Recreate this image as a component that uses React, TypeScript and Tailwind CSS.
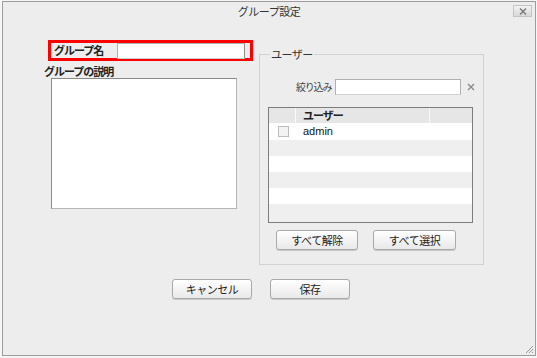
import React from "react";

const jp = { fontFamily: '"Noto Sans CJK JP", "Noto Sans", sans-serif' };

function Btn({ label, className }: { label: string; className: string }) {
  return (
    <button
      className={`${className} block h-[20px] rounded-[3px] border border-[#a9a9a9] bg-gradient-to-b from-white to-[#e9e9e9] text-[11px] leading-none tracking-[-0.5px] text-[#222] shadow-[0_1px_0_#c8c8c8]`}
      style={jp}
    >
      {label}
    </button>
  );
}

const rows = [
  { name: "admin", bg: "bg-white", h: "h-[17px]" },
  { name: "", bg: "bg-[#efefef]", h: "h-[16px]" },
  { name: "", bg: "bg-white", h: "h-[16px]" },
  { name: "", bg: "bg-[#efefef]", h: "h-[16px]" },
  { name: "", bg: "bg-white", h: "h-[16px]" },
  { name: "", bg: "bg-[#efefef]", h: "flex-1" },
];

export default function App() {
  return (
    <div className="w-[537px] h-[358px] bg-[#f6f6f6] overflow-hidden" style={jp}>
      <div className="relative ml-[2px] mt-[1px] w-[534px] h-[355px] border border-[#9c9c9c] bg-[#ededed] flex flex-col text-[#222]">
        {/* title bar */}
        <div className="relative h-[18px] flex items-center justify-center text-[11px] tracking-[-0.5px] text-[#333]">
          グループ設定
          <div className="absolute right-[3px] top-[3px] w-[19px] h-[12px] border border-[#c4c4c4] bg-gradient-to-b from-[#f2f2f2] to-[#d8d8d8] flex items-center justify-center">
            <svg width="8" height="7" viewBox="0 0 8 7">
              <path d="M1 0.5 L7 6.5 M7 0.5 L1 6.5" stroke="#777" strokeWidth="1.3" />
            </svg>
          </div>
        </div>

        <div className="flex items-start">
          {/* left column */}
          <div className="ml-[40px] mt-[20px] flex flex-col w-[209px]">
            <div className="ml-[5px] w-[205px] h-[21px] border-[3px] border-[#ff0000] flex items-center">
              <span className="pl-[3px] w-[66px] text-[11px] font-bold tracking-[-1px] leading-none">
                グループ名
              </span>
              <div className="w-[128px] h-[16px] bg-white border border-[#b0b0b0] border-r-[#8f8f8f] border-b-[#cfcfcf]" />
            </div>
            <div className="mt-[3px] ml-[1px] h-[14px] text-[11px] font-bold tracking-[-1px] leading-[14px]">
              グループの説明
            </div>
            <div className="ml-[8px] w-[186px] h-[131px] bg-white border border-[#8a8a8a] border-b-[#b5b5b5] border-r-[#b5b5b5]" />
          </div>

          {/* right column */}
          <fieldset className="ml-[7px] mt-[28px] w-[223px] border border-[#d2d2d2] px-[8px] pb-[14px]">
            <legend className="ml-[2px] px-[1px] text-[11px] leading-[12px] tracking-[-0.5px] text-[#333]">
              ユーザー
            </legend>
            <div className="mt-[19px] flex items-center h-[16px]">
              <span className="ml-[28px] w-[39px] text-[10px] tracking-[-1.2px] text-[#444] leading-none">
                絞り込み
              </span>
              <div className="w-[126px] h-[16px] bg-white border border-[#b0b0b0] border-b-[#d0d0d0]" />
              <svg className="ml-[6px]" width="8" height="8" viewBox="0 0 8 8">
                <path d="M1 1 L7 7 M7 1 L1 7" stroke="#8a8a8a" strokeWidth="1.4" />
              </svg>
            </div>

            {/* user table */}
            <div className="mt-[12px] w-[205px] h-[116px] border border-[#7c7c7c] flex flex-col bg-white shadow-[inset_1px_1px_0_#b8b8b8]">
              <div className="h-[15px] flex bg-[#e6e6e6] text-[11px] leading-[15px]">
                <div className="w-[27px] border-r border-[#fafafa]" />
                <div className="w-[134px] border-r border-[#fafafa] pl-[7px] font-bold tracking-[-1px]">
                  ユーザー
                </div>
                <div className="flex-1" />
              </div>
              {rows.map((r, i) => (
                <div key={i} className={`${r.h} ${r.bg} flex items-center`}>
                  {r.name && (
                    <>
                      <div className="ml-[9px] w-[11px] h-[11px] border border-[#bdbdbd] bg-[#f3f3f3]" />
                      <span
                        className="ml-[14px] text-[11px] leading-none text-[#111]"
                        style={{ fontFamily: '"Liberation Sans", Arial, sans-serif' }}
                      >
                        {r.name}
                      </span>
                    </>
                  )}
                </div>
              ))}
            </div>

            <div className="mt-[7px] flex">
              <Btn label="すべて解除" className="ml-[8px] w-[82px]" />
              <Btn label="すべて選択" className="ml-[15px] w-[83px]" />
            </div>
          </fieldset>
        </div>

        {/* footer buttons */}
        <div className="mt-[14px] ml-[169px] flex gap-[18px]">
          <Btn label="キャンセル" className="w-[80px]" />
          <Btn label="保存" className="w-[80px]" />
        </div>

        {/* resize grip */}
        <svg className="absolute right-[1px] bottom-[1px]" width="10" height="10" viewBox="0 0 10 10">
          <path d="M9 2 L2 9 M9 5 L5 9 M9 8 L8 9" stroke="#9a9a9a" strokeWidth="1" />
        </svg>
      </div>
    </div>
  );
}
